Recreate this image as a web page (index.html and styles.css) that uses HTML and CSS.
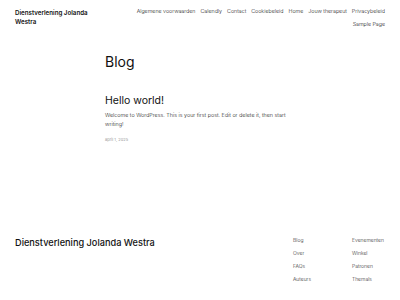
FILE: index.html
```html
<!DOCTYPE html>
<html lang="nl">
<head>
    <meta charset="UTF-8">
    <meta name="viewport" content="width=device-width, initial-scale=1.0">
    <title>Blog - Dienstverlening Jolanda Westra</title>
    <link rel="stylesheet" href="styles.css">
</head>
<body>
<header class="site-header">
    <div class="site-title">Dienstverlening Jolanda<br>Westra</div>
    <nav class="main-nav">
        <a href="#">Algemene voorwaarden</a>
        <a href="#">Calendly</a>
        <a href="#">Contact</a>
        <a href="#">Cookiebeleid</a>
        <a href="#">Home</a>
        <a href="#">Jouw therapeut</a>
        <a href="#">Privacybeleid</a>
        <a href="#">Sample Page</a>
    </nav>
</header>

<main class="content">
    <h1 class="page-title">Blog</h1>
    <article class="post">
        <h2 class="post-title">Hello world!</h2>
        <p class="post-excerpt">Welcome to WordPress. This is your first post. Edit or delete it, then start writing!</p>
        <div class="post-date">april 1, 2025</div>
    </article>
</main>

<footer class="site-footer">
    <div class="footer-title">Dienstverlening Jolanda Westra</div>
    <div class="footer-links">
        <ul class="col-first">
            <li><a href="#">Blog</a></li>
            <li><a href="#">Over</a></li>
            <li><a href="#">FAQs</a></li>
            <li><a href="#">Auteurs</a></li>
        </ul>
        <ul>
            <li><a href="#">Evenementen</a></li>
            <li><a href="#">Winkel</a></li>
            <li><a href="#">Patronen</a></li>
            <li><a href="#">Themals</a></li>
        </ul>
    </div>
</footer>
</body>
</html>
```

FILE: styles.css
```css
body {
    font-family: Inter, "Noto Sans", sans-serif;
    background-color: #ffffff;
    color: #111111;
    margin: 0;
}
a {
    color: inherit;
    text-decoration: none;
}
.site-header {
    display: flex;
    justify-content: space-between;
    align-items: flex-start;
    padding: 8px 15px 0 15px;
}
.site-title {
    font-size: 6.2px;
    font-weight: 600;
    line-height: 9px;
}
.main-nav {
    display: flex;
    flex-wrap: wrap;
    justify-content: flex-end;
    column-gap: 5px;
    row-gap: 6px;
    width: 255px;
    font-size: 5.3px;
    font-weight: 300;
    line-height: 7px;
    color: #222;
}
.content {
    width: 190px;
    margin: 0 auto;
    padding-top: 25px;
}
.page-title {
    font-size: 14px;
    font-weight: 400;
    margin: 0 0 23px 0;
    line-height: 18px;
}
.post-title {
    font-size: 10.5px;
    font-weight: 400;
    margin: 0 0 3px 0;
    line-height: 14px;
}
.post-excerpt {
    font-size: 5.4px;
    font-weight: 300;
    line-height: 9px;
    margin: 0 0 8px 0;
    color: #222;
}
.post-date {
    font-size: 4px;
    color: #999;
}
.site-footer {
    display: flex;
    justify-content: space-between;
    padding: 95px 15px 0 15px;
}
.footer-title {
    font-size: 9.2px;
    font-weight: 500;
}
.footer-links {
    display: flex;
}
.footer-links ul {
    list-style: none;
    margin: 0;
    padding: 0;
    width: 33px;
    flex-shrink: 0;
    font-size: 5px;
    font-weight: 300;
    color: #333;
}
.footer-links .col-first {
    width: 59px;
}
.footer-links li {
    height: 13px;
}
```
